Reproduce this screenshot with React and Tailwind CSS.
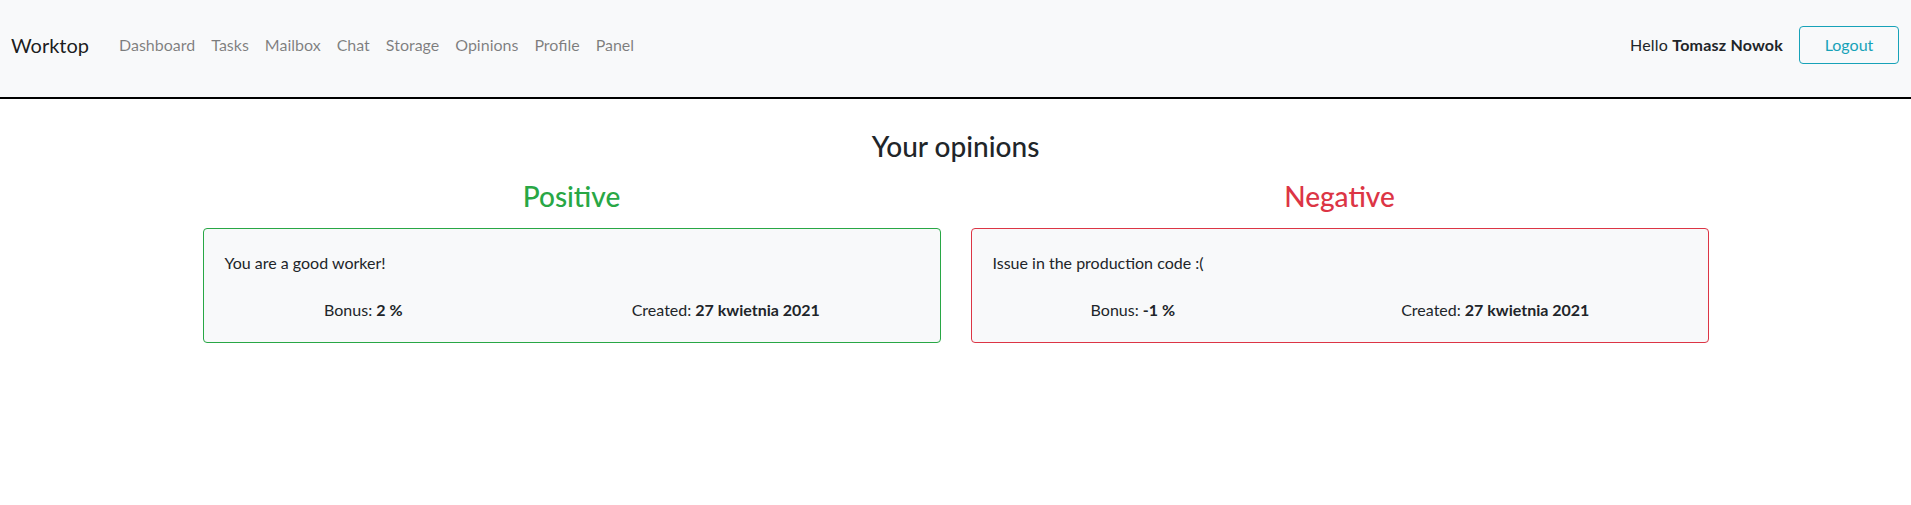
export default function App() {
  const links = ["Dashboard", "Tasks", "Mailbox", "Chat", "Storage", "Opinions", "Profile", "Panel"];
  const font = { fontFamily: '"Lato", "Noto Sans", sans-serif' };
  return (
    <div className="min-h-[505px] bg-white text-[#212529]" style={font}>
      <nav className="h-[99px] bg-[#f8f9fa] border-b-2 border-black flex items-center pl-[11px] pr-3 pb-[8px]">
        <span className="text-[20px] leading-[30px] text-black/90">Worktop</span>
        <ul className="flex items-center gap-4 ml-[30px] text-[16px] leading-6">
          {links.map((l) => (
            <li key={l} className="text-black/50">{l}</li>
          ))}
        </ul>
        <div className="ml-auto flex items-center gap-4">
          <span className="text-[16px] leading-6 tracking-[0.2px]">
            Hello <b className="font-bold">Tomasz Nowok</b>
          </span>
          <button className="w-[100px] h-[38px] border border-[#17a2b8] rounded text-[#17a2b8] text-[16px] leading-6">
            Logout
          </button>
        </div>
      </nav>
      <main className="pt-[31px]">
        <h3 className="text-center text-[28px] leading-[1.2] font-medium">Your opinions</h3>
        <div className="w-[1536px] mx-auto grid grid-cols-2 mt-[16px]">
          <Column title="Positive" titleColor="text-[#28a745]" border="border-[#28a745]" text="You are a good worker!" bonus="2 %" />
          <Column title="Negative" titleColor="text-[#dc3545]" border="border-[#dc3545]" text="Issue in the production code :(" bonus="-1 %" />
        </div>
      </main>
    </div>
  );
}

function Column({ title, titleColor, border, text, bonus }) {
  return (
    <div className="px-[15px]">
      <h3 className={`text-center text-[28px] leading-[1.2] font-medium ${titleColor}`}>{title}</h3>
      <div className={`mt-[15px] border ${border} rounded bg-[#f8f9fa] pl-[21px] pr-5 pt-[22px] pb-[20px] text-[16px] leading-6`}>
        <p>{text}</p>
        <div className="flex justify-around -mx-[15px] mt-[23px]">
          <span>
            Bonus: <b className="font-bold">{bonus}</b>
          </span>
          <span>
            Created: <b className="font-bold">27 kwietnia 2021</b>
          </span>
        </div>
      </div>
    </div>
  );
}
